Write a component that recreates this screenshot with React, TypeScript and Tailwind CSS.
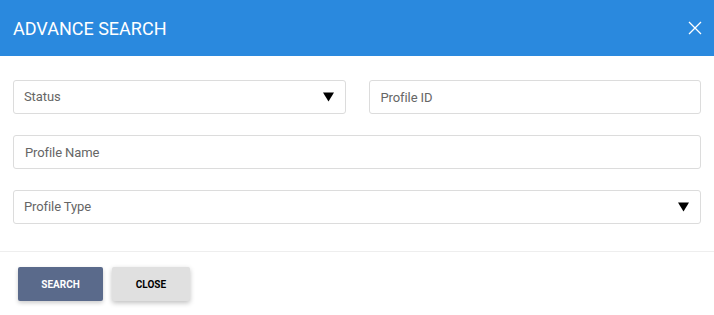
import { useState } from 'react';

function Caret() {
  return (
    <svg width="11" height="10" viewBox="0 0 11 10" className="shrink-0">
      <path d="M0 0.5 L11 0.5 L5.5 9.5 Z" fill="#000" />
    </svg>
  );
}

function SelectField({ label }: { label: string }) {
  return (
    <div className="h-[34px] w-full flex items-center justify-between pl-[10px] pr-[11px] border border-[#dcdcdc] rounded-[3px] bg-white text-[13px] tracking-[-0.1px] text-[#666]">
      <span>{label}</span>
      <Caret />
    </div>
  );
}

function TextField({ placeholder }: { placeholder: string }) {
  const [value, setValue] = useState('');
  return (
    <input
      value={value}
      onChange={(e) => setValue(e.target.value)}
      placeholder={placeholder}
      className="h-[34px] w-full px-[11px] border border-[#dcdcdc] rounded-[3px] bg-white text-[13px] tracking-[-0.1px] text-[#333] placeholder:text-[#666] outline-none"
    />
  );
}

export default function App() {
  return (
    <div className="w-[714px] h-[315px] bg-white font-['Roboto',sans-serif] flex flex-col">
      {/* Header */}
      <div className="h-[56px] bg-[#2a89de] flex items-center justify-between pl-[13px] pr-[12px]">
        <h1 className="text-white text-[18px]">ADVANCE SEARCH</h1>
        <svg width="14" height="14" viewBox="0 0 14 14">
          <path d="M1 1 L13 13 M13 1 L1 13" stroke="#fff" strokeWidth="1.3" />
        </svg>
      </div>

      {/* Form */}
      <div className="px-[13px] pt-[24px] pb-[27px] flex flex-col gap-[21px] border-b border-[#eeeeee]">
        <div className="grid grid-cols-2 gap-[23px]">
          <SelectField label="Status" />
          <TextField placeholder="Profile ID" />
        </div>
        <TextField placeholder="Profile Name" />
        <SelectField label="Profile Type" />
      </div>

      {/* Footer */}
      <div className="flex gap-[9px] pl-[18px] pt-[15px]">
        <button className="w-[85px] h-[34px] rounded-[2px] bg-[#5a6a8b] text-white text-[10px] font-bold shadow-[0_2px_4px_rgba(0,0,0,0.2)]">
          SEARCH
        </button>
        <button className="w-[78px] h-[34px] rounded-[2px] bg-[#e0e0e0] text-black text-[10px] font-bold shadow-[0_2px_5px_rgba(0,0,0,0.25)]">
          CLOSE
        </button>
      </div>
    </div>
  );
}
